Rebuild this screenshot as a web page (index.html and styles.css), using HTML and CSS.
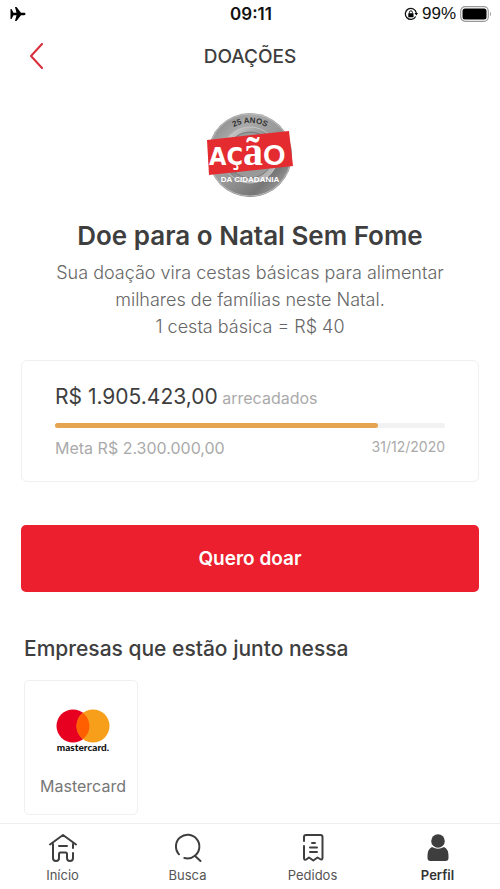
FILE: index.html
```html
<!DOCTYPE html>
<html lang="pt-BR">
<head>
<meta charset="utf-8">
<meta name="viewport" content="width=device-width, initial-scale=1">
<title>Doações</title>
<link rel="stylesheet" href="styles.css">
</head>
<body>
<div class="status">
  <svg class="plane" width="16" height="14" viewBox="0 0 16 14" aria-hidden="true"><path d="M.5 2h1l2 3.800h3L5 0h1.500l4.500 5.800h3c2 0 2 2.400 0 2.400h-3L6.500 14H5l1.500-5.800h-3L1.500 12h-1z"/></svg>
  <span class="clock">09:11</span>
  <div class="power">
    <svg width="14" height="14" viewBox="0 0 14 14" aria-hidden="true"><path d="M11.700 9.500A5.500 5.500 0 1 1 12.300 6" fill="none" stroke="#111" stroke-width="1.300"/><path d="M10.500 6h3.500l-1.600 2.600zM4.300 6.300h5.200v3.900H4.300z"/><path d="M5.400 6.500V5.300a1.500 1.500 0 0 1 3 0v1.200" fill="none" stroke="#111"/></svg>
    <span>99%</span>
    <svg width="32" height="16" viewBox="0 0 32 16" aria-hidden="true"><rect x=".7" y=".7" width="27.600" height="14.600" rx="4.500" fill="none" stroke="#999" stroke-width="1.200"/><rect x="2.500" y="2.500" width="24" height="11" rx="2.500"/><path d="M30 5.500q2 2.500 0 5z" fill="#999"/></svg>
  </div>
</div>
<header class="header">
  <button class="back" type="button" aria-label="Voltar"><svg width="13" height="26" viewBox="0 0 13 26" aria-hidden="true"><path d="M12 1 1 13l11 12" fill="none" stroke="#d92c3c" stroke-width="2" stroke-linecap="round" stroke-linejoin="round"/></svg></button>
  <h1 class="title">DOAÇÕES</h1>
</header>
<main class="main">
  <section class="intro">
    <svg class="seal" width="88" height="86" viewBox="0 0 88 86" role="img" aria-label="25 anos Ação da Cidadania">
      <defs>
        <linearGradient id="metal" x1="0" y1="0" x2="1" y2="1"><stop offset="0" stop-color="#777"/><stop offset=".28" stop-color="#aaa"/><stop offset=".5" stop-color="#999"/><stop offset=".75" stop-color="#777"/><stop offset="1" stop-color="#bbb"/></linearGradient>
        <linearGradient id="plate" x1="0" y1="0" x2="1" y2="1"><stop offset="0" stop-color="#ddd"/><stop offset=".5" stop-color="#888"/><stop offset="1" stop-color="#ccc"/></linearGradient>
        <path id="arc" d="M13 31A34 34 0 0 1 75 31"/>
      </defs>
      <circle cx="44" cy="43" r="42" fill="url(#metal)"/>
      <circle cx="44" cy="43" r="41" fill="none" stroke="#bbb"/>
      <circle cx="44" cy="43" r="28" fill="url(#plate)" stroke="#c4c4c4"/>
      <circle cx="44" cy="43" r="23" fill="#999" stroke="#777"/>
      <path d="M1 28 83 19l4 35L3 63z" fill="#e42c30"/>
      <text class="seal-year" text-anchor="middle"><textPath href="#arc" startOffset="50%">25 ANOS</textPath></text>
      <text class="seal-name" x="3" y="53">AÇ<tspan class="seal-serif">ã</tspan><tspan class="seal-round">O</tspan></text>
      <text class="seal-sub" x="44" y="70" text-anchor="middle">DA CIDADANIA</text>
    </svg>
    <h2 class="headline">Doe para o Natal Sem Fome</h2>
    <p class="lead">Sua doação vira cestas básicas para alimentar<br>milhares de famílias neste Natal.<br>1 cesta básica = R$ 40</p>
  </section>
  <section class="goal">
    <p class="raised"><strong>R$ 1.905.423,00</strong> arrecadados</p>
    <div class="track"><div class="fill" style="width:82.800%"></div></div>
    <div class="target"><span>Meta R$ 2.300.000,00</span><time datetime="2020-12-31">31/12/2020</time></div>
  </section>
  <button class="donate" type="button">Quero doar</button>
  <section class="partners">
    <h2 class="subtitle">Empresas que estão junto nessa</h2>
    <a class="partner" href="#mastercard">
      <svg width="54" height="46" viewBox="0 0 54 46" aria-hidden="true"><circle cx="17" cy="17" r="16.500" fill="#e70020"/><circle cx="37" cy="17" r="16.500" fill="#f79e1b"/><path d="M27 3.900a16.500 16.500 0 0 1 0 26.200a16.500 16.500 0 0 1 0-26.200z" fill="#ff5f00"/><text class="brand" x="27" y="42" text-anchor="middle">mastercard.</text></svg>
      <span>Mastercard</span>
    </a>
  </section>
</main>
<nav class="tabs">
  <a href="#inicio"><svg width="30" height="30" viewBox="0 0 30 30" aria-hidden="true"><path d="M2 11.500 15 2l13 9.500M5 11v14q0 3 3 3t3-3v-4q0-1.500 1.500-1.500h5q1.500 0 1.500 1.500v4q0 3 3 3t3-3v-5M25 11v4M11 13h8"/></svg><span>Início</span></a>
  <a href="#busca"><svg width="30" height="30" viewBox="0 0 30 30" aria-hidden="true"><path d="M6 21.300A11.700 11.700 0 1 1 21.800 22.700A11.700 11.700 0 0 1 11.300 25M21.800 22.700 27.500 28"/></svg><span>Busca</span></a>
  <a href="#pedidos"><svg width="30" height="30" viewBox="0 0 30 30" aria-hidden="true"><path d="M6 8V4q0-2 2-2h14.500q2 0 2 2v20.500q0 3-2.500 1.500L19.500 24.500l-4.200 3-4.300-3-2.500 1.800Q6 27.500 6 25V13M14 10h3M12 14.500h7M12 19h7"/></svg><span>Pedidos</span></a>
  <a class="active" href="#perfil" aria-current="page"><svg width="30" height="30" viewBox="0 0 30 30" aria-hidden="true"><circle cx="15" cy="8" r="6.800"/><path d="M9 14q6 3.500 12 0 5 2 4.500 11 0 3-3 3h-15q-3 0-3-3Q4 16 9 14z"/></svg><span>Perfil</span></a>
</nav>
</body>
</html>
```
FILE: styles.css
```css
* { box-sizing: border-box; }
body {
  margin: 0;
  min-height: 100vh;
  display: flex;
  flex-direction: column;
  background: #fff;
  color: #3e3e3e;
  font-family: Inter, "Liberation Sans", sans-serif;
}
h1, h2, p { margin: 0; }
a { color: inherit; text-decoration: none; }
button { border: 0; font: inherit; cursor: pointer; }
.status {
  display: grid;
  grid-template-columns: 1fr auto 1fr;
  align-items: center;
  height: 27px;
  padding: 0 8px 0 10px;
  color: #111;
  font-size: 17px;
}
.clock { font-weight: 600; }
.power { display: flex; align-items: center; justify-content: flex-end; gap: 4px; }
.power span { font-family: "Liberation Sans", sans-serif; }
.header {
  display: grid;
  grid-template-columns: 1fr auto 1fr;
  align-items: center;
  height: 58px;
  padding: 0 22px;
}
.back { justify-self: start; display: flex; padding: 8px; background: none; }
.title { font-size: 19px; font-weight: 500; }
.main { flex: 1; padding: 27px 21px 8px; }
.intro { display: flex; flex-direction: column; align-items: center; text-align: center; }
.seal-year { font: 700 8px "Liberation Sans", sans-serif; fill: #333; }
.seal-name { font: 700 25px "DejaVu Sans Condensed", "DejaVu Sans", sans-serif; fill: #fff; }
.seal-serif { font: 700 40px "Liberation Serif", serif; }
.seal-round { font: 700 29px "Liberation Sans", sans-serif; }
.seal-sub { font: 700 8px "Liberation Sans", sans-serif; fill: #fff; }
.headline { margin-top: 20px; font-size: 26px; line-height: 36px; font-weight: 600; }
.lead { margin-top: 5px; font-size: 18px; line-height: 27px; font-weight: 300; color: #666; }
.goal { margin-top: 20px; padding: 20px 33px; border: 1px solid #f0f0f0; border-radius: 6px; }
.raised { font-size: 16px; line-height: 32px; color: #aaa; }
.raised strong { color: #3e3e3e; font-size: 21px; font-weight: 400; }
.track { height: 5px; margin-top: 9px; border-radius: 3px; background: #f2f2f2; }
.fill { height: 100%; border-radius: 3px; background: #e5a550; }
.target { display: flex; justify-content: space-between; margin-top: 8px; font-size: 16px; line-height: 25px; color: #aaa; }
.target time { font-size: 14px; line-height: 22px; }
.donate {
  display: block;
  width: 100%;
  height: 67px;
  margin-top: 43px;
  border-radius: 5px;
  background: #eb1f2d;
  color: #fff;
  font-size: 19px;
  font-weight: 600;
}
.partners { margin-top: 43px; padding-left: 3px; }
.subtitle { font-size: 21px; line-height: 28px; font-weight: 500; }
.partner {
  display: inline-flex;
  flex-direction: column;
  align-items: center;
  gap: 19px;
  min-width: 114px;
  margin-top: 17px;
  padding: 28px 11px 15px 15px;
  border: 1px solid #f0f0f0;
  border-radius: 5px;
  color: #777;
  font-size: 16px;
  line-height: 25px;
  vertical-align: top;
}
.brand { font: 900 10px Lato, sans-serif; fill: #111; }
.tabs {
  position: sticky;
  bottom: 0;
  display: grid;
  grid-template-columns: repeat(4, 1fr);
  padding: 9px 0 5px;
  border-top: 1px solid #eee;
  background: #fff;
}
.tabs a { display: flex; flex-direction: column; align-items: center; gap: 3px; font-size: 13px; line-height: 19px; color: #555; }
.tabs svg { fill: none; stroke: #3e3e3e; stroke-width: 2; stroke-linecap: round; stroke-linejoin: round; }
.tabs .active { color: #333; font-weight: 600; }
.tabs .active svg { fill: #3e3e3e; stroke: none; }
```
